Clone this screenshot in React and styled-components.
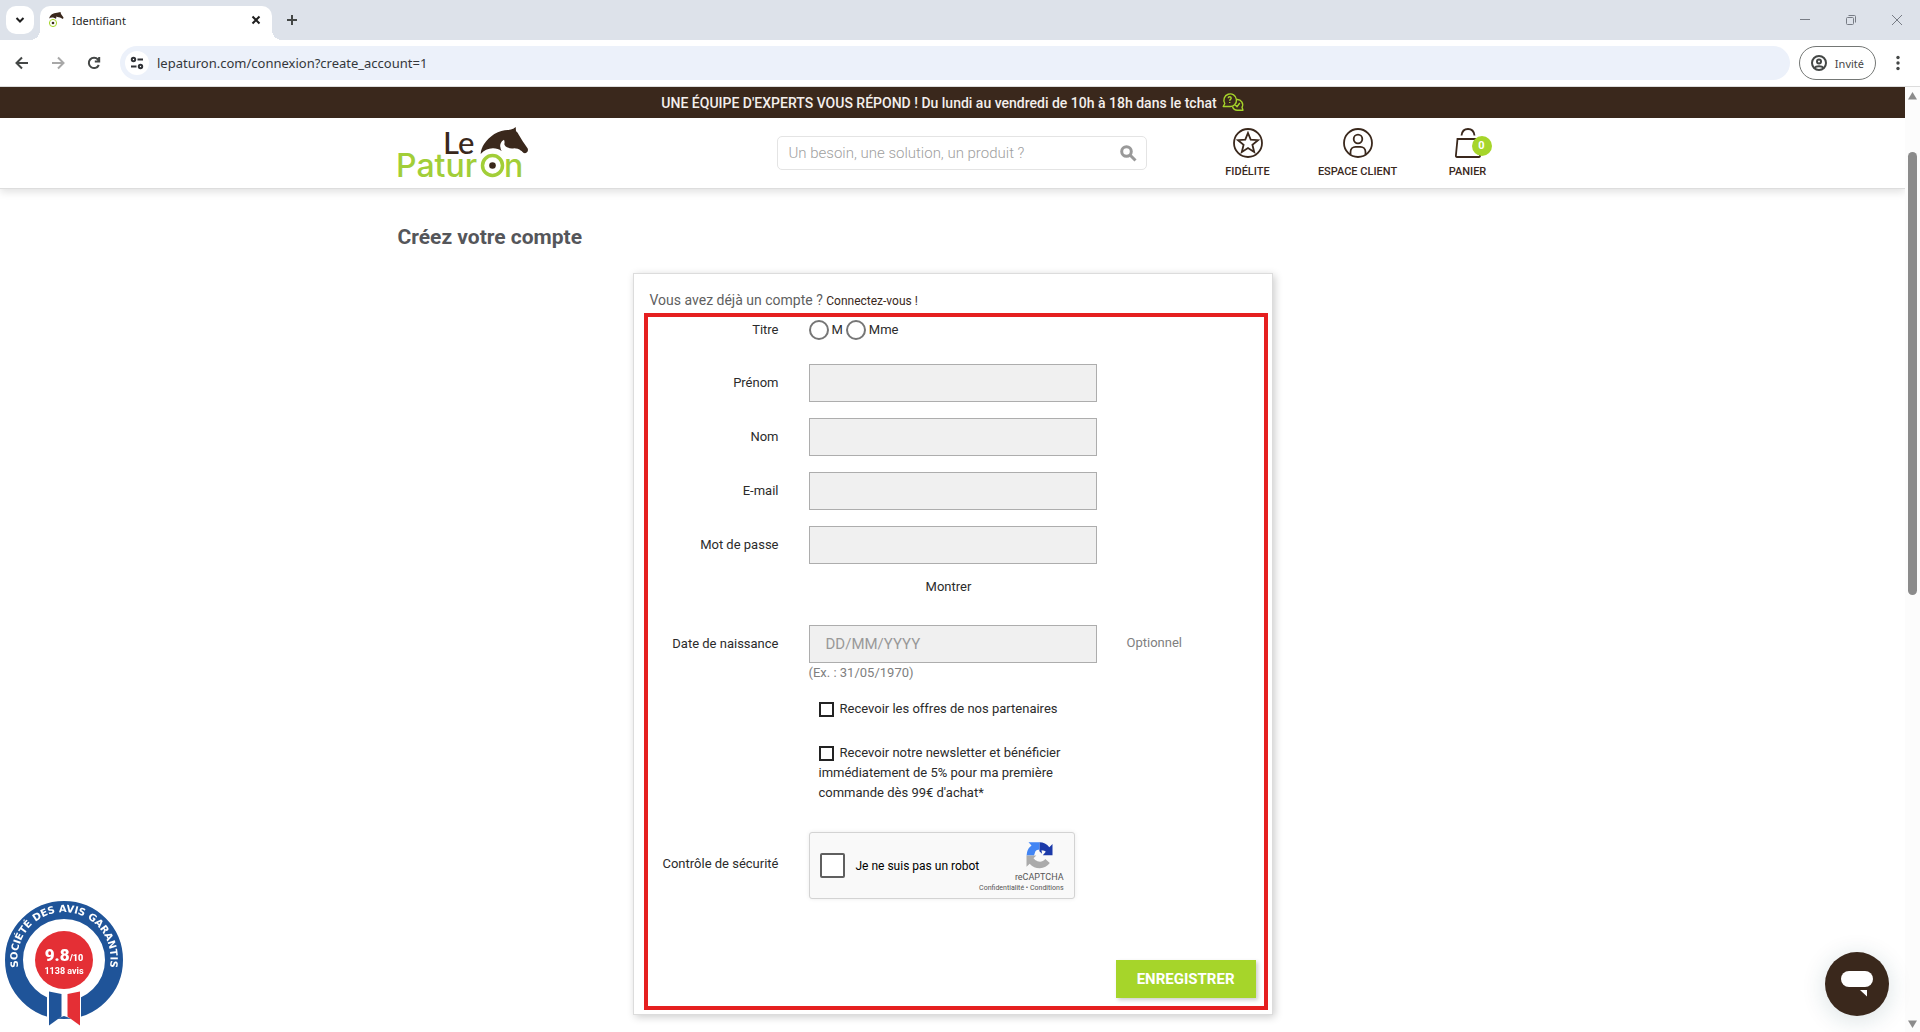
import React from "react";
import styled, { createGlobalStyle } from "styled-components";

const BROWN = "#3a281c";
const GREEN = "#a6d52a";

const Global = createGlobalStyle`
  * {
    box-sizing: border-box;
  }
  body {
    margin: 0;
    background: #fff;
    font-family: Roboto, "Liberation Sans", sans-serif;
    font-size: 13px;
    color: #2b2b2b;
  }
  button,
  input {
    font-family: inherit;
  }
  button {
    padding: 0;
    border: 0;
    background: none;
    color: inherit;
  }
  svg {
    display: block;
    overflow: visible;
  }
`;

/* ---------- browser window ---------- */

const Shell = styled.div`
  display: flex;
  flex-direction: column;
  min-height: 100vh;
`;

const TabStrip = styled.div`
  display: flex;
  align-items: center;
  height: 40px;
  padding-left: 6px;
  background: #dde2ea;
  font-family: "Noto Sans", sans-serif;
`;

const TabSearch = styled.button`
  display: grid;
  place-items: center;
  width: 28px;
  height: 28px;
  border-radius: 10px;
  background: #fff;
`;

const Tab = styled.div`
  position: relative;
  align-self: flex-end;
  display: flex;
  align-items: center;
  gap: 8px;
  width: 232px;
  height: 34px;
  margin-left: 6px;
  padding: 0 8px;
  padding-bottom: 6px;
  border-radius: 10px 10px 0 0;
  background: #fff;
  font-size: 11px;
  color: #1f1f1f;

  &::before,
  &::after {
    content: "";
    position: absolute;
    bottom: 0;
    width: 10px;
    height: 10px;
  }
  &::before {
    right: 100%;
    background: radial-gradient(circle at 0 0, transparent 10px, #fff 10px);
  }
  &::after {
    left: 100%;
    background: radial-gradient(circle at 100% 0, transparent 10px, #fff 10px);
  }
`;

const TabTitle = styled.span`
  flex: 1;
`;

const StripButton = styled.button`
  display: grid;
  place-items: center;
  width: ${(p) => p.$w || 16}px;
  height: 28px;
`;

const WindowButtons = styled.div`
  display: flex;
  margin-left: auto;
`;

const Toolbar = styled.div`
  display: flex;
  align-items: center;
  height: 47px;
  padding: 0 8px 0 4px;
  border-bottom: 1px solid #dcdcdc;
  background: #fff;
  font-family: "Noto Sans", sans-serif;
`;

const NavButton = styled.button`
  display: grid;
  place-items: center;
  width: 36px;
  height: 34px;
`;

const Address = styled.label`
  flex: 1;
  display: flex;
  align-items: center;
  gap: 8px;
  height: 34px;
  margin: 0 9px 0 8px;
  padding: 0 5px;
  border-radius: 17px;
  background: #ecf1fa;
`;

const SiteInfo = styled.span`
  display: grid;
  place-items: center;
  width: 24px;
  height: 24px;
  border-radius: 50%;
  background: #fff;
`;

const AddressInput = styled.input`
  flex: 1;
  padding: 0;
  border: 0;
  outline: 0;
  background: transparent;
  font-size: 13px;
  color: #34373b;
`;

const Profile = styled.button`
  display: flex;
  align-items: center;
  gap: 8px;
  height: 34px;
  padding: 0 11px;
  border: 1px solid #747775;
  border-radius: 17px;
  font-size: 11px;
  color: #474747;
`;

const Menu = styled(NavButton)`
  width: 28px;
  margin-left: 8px;
`;

const Viewport = styled.div`
  flex: 1;
  display: flex;
`;

const Page = styled.div`
  flex: 1;
`;

const Scrollbar = styled.div`
  display: flex;
  flex-direction: column;
  align-items: center;
  width: 15px;
  padding: 5px 0 4px;
  background: #fcfcfc;
`;

const ScrollTrack = styled.div`
  flex: 1;
  padding: 52px 0 0;
`;

const Thumb = styled.div`
  width: 9px;
  height: 51%;
  border-radius: 5px;
  background: #8b8b8b;
`;

/* ---------- site header ---------- */

const Banner = styled.div`
  display: flex;
  justify-content: center;
  align-items: center;
  gap: 5px;
  height: 31px;
  background: ${BROWN};
  font-size: 14px;
  font-weight: 500;
  color: #f4efec;
`;

const Header = styled.header`
  border-bottom: 1px solid #ddd;
  box-shadow: 0 3px 8px rgba(0, 0, 0, 0.12);
`;

const Container = styled.div`
  max-width: 1110px;
  margin: 0 auto;
`;

const HeaderInner = styled(Container)`
  display: grid;
  grid-template-columns: 379px 370px 1fr;
  align-items: center;
  height: 70px;
`;

const SearchForm = styled.form`
  display: flex;
  align-items: center;
  height: 34px;
  padding: 0 10px 0 11px;
  border: 1px solid #e4e4e4;
  border-radius: 5px;
`;

const SearchInput = styled.input`
  flex: 1;
  min-width: 0;
  padding: 0;
  border: 0;
  outline: 0;
  font-size: 15px;
  font-weight: 300;

  &::placeholder {
    color: #a0a0a0;
  }
`;

const Nav = styled.nav`
  display: flex;
  justify-content: flex-end;
  gap: 30px;
`;

const NavItem = styled.a`
  display: flex;
  flex-direction: column;
  align-items: center;
  gap: 6px;
  width: 80px;
  padding-top: 2px;
  font-size: 11px;
  line-height: 16px;
  font-weight: 500;
  color: ${BROWN};
  text-decoration: none;
  white-space: nowrap;
`;

const IconWrap = styled.span`
  position: relative;
`;

const CartCount = styled.span`
  position: absolute;
  top: 8px;
  left: 19px;
  width: 20px;
  height: 20px;
  border-radius: 50%;
  background: ${GREEN};
  font-size: 11px;
  line-height: 20px;
  font-weight: 700;
  text-align: center;
  color: #fff;
`;

/* ---------- account form ---------- */

const Main = styled.main`
  padding: 32px 0 17px;
`;

const Title = styled.h1`
  margin: 0 0 20px;
  font-size: 21px;
  line-height: 32px;
  font-weight: 700;
  color: #55565a;
`;

const Card = styled.section`
  max-width: 640px;
  margin: 0 auto;
  padding: 14px 4px 4px 10px;
  border: 1px solid #dcdcdc;
  box-shadow: 2px 2px 8px rgba(0, 0, 0, 0.2);
`;

const Intro = styled.p`
  margin: 0;
  padding-left: 6px;
  font-size: 14px;
  line-height: 24px;
  color: #5f5f5f;

  a {
    font-size: 12px;
    color: ${BROWN};
    text-decoration: none;
  }
`;

const AccountForm = styled.form`
  display: flex;
  flex-direction: column;
  gap: 16px;
  padding: 0 8px 8px 0;
  border: 4px solid #e51f20;
`;

const Row = styled.div`
  display: grid;
  grid-template-columns: 131px 288px 1fr;
  column-gap: 30px;
  line-height: 38px;
`;

const RowLabel = styled.label`
  text-align: right;
`;

const TitleRow = styled(Row)`
  padding: 3px 0 8px;
  line-height: 20px;
`;

const CaptchaRow = styled(Row)`
  line-height: 64px;
`;

const Radios = styled.div`
  display: flex;
  align-items: center;
  gap: 3px;
`;

const Radio = styled.input`
  appearance: none;
  width: 20px;
  height: 20px;
  margin: 0;
  border: 2px solid #767676;
  border-radius: 50%;

  &:checked {
    background: radial-gradient(circle, #767676 5px, transparent 6px);
  }
`;

const TextInput = styled.input`
  display: block;
  width: 100%;
  height: 38px;
  padding: 0 16px;
  border: 1px solid #adadad;
  border-radius: 0;
  outline: 0;
  background: #f0f0f0;
  font-size: 15px;

  &::placeholder {
    color: #999;
  }
`;

const ShowButton = styled.button`
  display: block;
  width: 100%;
  height: 45px;
  padding-right: 8px;
  font-size: 13px;
`;

const Muted = styled.span`
  display: block;
  font-size: 13px;
  line-height: ${(p) => p.$lh || 20}px;
  color: #808080;
`;

const Checks = styled.div`
  grid-column: 2;
  display: flex;
  flex-direction: column;
  gap: 24px;
  padding: 0 10px 13px;
  line-height: 20px;
`;

const Check = styled.input`
  appearance: none;
  width: 15px;
  height: 15px;
  margin: 0 6px 0 0;
  border: 2px solid #232323;
  background: #fff;
  vertical-align: -4px;

  &:checked {
    background: #232323;
  }
`;

const Captcha = styled.div`
  display: flex;
  align-items: center;
  width: 266px;
  height: 67px;
  padding: 0 10px;
  border: 1px solid #d3d3d3;
  border-radius: 3px;
  background: #f9f9f9;
  box-shadow: 0 0 4px rgba(0, 0, 0, 0.08);
  line-height: 12px;
`;

const RobotLabel = styled.label`
  display: flex;
  flex: 1;
  align-items: center;
  gap: 11px;
  font-size: 12px;
  color: #000;
  white-space: nowrap;
`;

const RobotCheck = styled.input`
  appearance: none;
  width: 25px;
  height: 25px;
  margin: 0;
  border: 2px solid #5f5f5f;
  border-radius: 2px;
  background: #fff;

  &:checked {
    background: #4a90e2;
  }
`;

const CaptchaBrand = styled.div`
  display: flex;
  flex-direction: column;
  align-items: flex-end;
  width: 86px;
  margin-left: -40px;
  padding-top: 4px;
  font-size: 9px;
  color: #555;

  svg {
    margin: 0 11px 2px 0;
  }
`;

const CaptchaLinks = styled.div`
  font-size: 7px;
  line-height: 10px;
  white-space: nowrap;

  a {
    color: #555;
    text-decoration: none;
  }
`;

const Submit = styled.button`
  align-self: flex-end;
  height: 38px;
  margin-top: 45px;
  padding: 0 21px;
  background: ${GREEN};
  box-shadow: 2px 2px 4px rgba(0, 0, 0, 0.2);
  font-size: 15px;
  font-weight: 700;
  color: #fff;
`;

/* ---------- floating widgets ---------- */

const ReviewBadge = styled.a`
  position: fixed;
  left: 4px;
  bottom: 4px;
`;

const ChatButton = styled.button`
  position: fixed;
  right: 31px;
  bottom: 16px;
  display: grid;
  place-items: center;
  width: 64px;
  height: 64px;
  border-radius: 50%;
  background: ${BROWN};
  box-shadow: 0 4px 24px rgba(20, 70, 80, 0.16);
`;

/* ---------- drawings ---------- */

const HORSE =
  "M82.7 28C83 21 88 13.500 96.300 8C101 5 106 4.200 109.700 4C112 3.800 114 3.200 115.300 2.700L117.700 1L118 5.300C119 6 120 7 120.300 8L124.700 15.300L129.700 22.500C130.200 24 130 25.500 129 26.300C128 27.200 126.500 27.300 125.700 27C124.500 26 124 25 123 24.700C121 23 118.500 22.400 116.300 22.300C113 22.800 111 22.300 109 21.300C107 20 106.500 19 106.300 18C106.800 16.500 106.500 15 106 13.700C104.500 14.500 103.600 15.500 103.300 16.300C102.300 18 102 19.500 102.300 20.700C102.500 22.500 103 24 103.700 25.300C101 23 98 22.200 94.700 22.300C90 22.300 86 24.500 82.700 28Z";

const Logo = () => (
  <svg width="132" height="54" viewBox="0 0 132 54" role="img" aria-label="Le Paturon">
    <text x="45" y="28" fill={BROWN} fontFamily="Lato, sans-serif" fontSize="31" fontWeight="500">Le</text>
    <g fontFamily="Inter, sans-serif" fontSize="32" fontWeight="500" fill="#a2ce38">
      <text x="-2" y="51">Patur</text>
      <text x="106" y="51">n</text>
    </g>
    <path d={HORSE} fill={BROWN} />
    <circle cx="94.500" cy="39.500" r="10" fill="#fff" stroke="#a2ce38" strokeWidth="3.500" />
    <circle cx="94.500" cy="39.500" r="3.300" fill={BROWN} />
  </svg>
);

const Favicon = () => (
  <svg width="16" height="16" viewBox="0 0 16 16">
    <path d="M1 6.500C2 3 5 1 9 .800L12.500 0L13 2L15.500 5.500L15 7L12 5.500L9.500 5L8.500 4.500L8 7C6 5 3 5 1 6.500Z" fill={BROWN} />
    <circle cx="5" cy="11" r="3.600" fill="#fff" stroke={GREEN} />
    <circle cx="5" cy="11" r="1.300" fill={BROWN} />
  </svg>
);

const Stroke = ({ size = 16, width = 2, color = "#444746", children }) => (
  <svg width={size} height={size} viewBox={`0 0 ${size} ${size}`} fill="none" stroke={color} strokeWidth={width}>
    {children}
  </svg>
);

const ChatBubbles = () => (
  <Stroke size={22} width={1.400} color={GREEN}>
    <path d="M2.800 11.500A6.300 6.300 0 1 1 7.500 14.500H1.200L2.800 11.500Z" strokeLinejoin="round" />
    <path d="M14.800 7.500A5.300 5.300 0 0 1 20 15.300L21 18.200H15.800A5.300 5.300 0 0 1 10.500 14.800" strokeLinejoin="round" />
    <path d="M6.200 6.200C6.200 4.300 9.200 4.300 9.200 6.200C9.200 7.300 7.700 7.500 7.700 8.700M7.700 10V11M13.300 13L15 14.600L17.800 11" />
  </Stroke>
);

const StarIcon = () => (
  <Stroke size={30} width={1.800} color={BROWN}>
    <circle cx="15" cy="15" r="14" />
    <path d="M15 5L17.700 11.700L25 12.200L19.400 16.800L21.200 24L15 20.100L8.800 24L10.600 16.800L5 12.200L12.300 11.700Z" />
  </Stroke>
);

const UserIcon = () => (
  <Stroke size={30} width={1.800} color={BROWN}>
    <circle cx="15" cy="15" r="14" />
    <circle cx="15" cy="11" r="4.300" />
    <path d="M7.500 26.500V24C7.500 20.500 10 18.800 12.500 18.800H17.500C20 18.800 22.500 20.500 22.500 24V26.500" />
  </Stroke>
);

const BagIcon = () => (
  <Stroke size={30} width={1.800} color={BROWN}>
    <path d="M4.500 11H25.500L27 27.500Q27.200 29 25.800 29H4Q2.800 29 2.900 27.500Z" />
    <path d="M8.500 7.500C9 3 11.500 1 15 1C18.500 1 21 3 21.500 7.500" />
  </Stroke>
);

const RecaptchaLogo = () => (
  <svg width="27" height="27" viewBox="0 0 27 27">
    <path d="M26.500 13.300V2L23.300 5.200A12.800 12.800 0 0 0 13.400 .300V9.200L16 11.800L15.500 8.300C18 8.300 19 9.300 19.800 9.700L16.800 13.300Z" fill="#1c3aa9" />
    <path d="M13.500 .300H2.500L5.500 3.500A12.800 12.800 0 0 0 .600 13.400H8L9.300 9.500C10.500 8 11.500 7.800 13.500 7.600Z" fill="#4285f4" />
    <path d="M.500 13.400V24.800L3.700 21.700A12.800 12.800 0 0 0 23.800 21.100L19.300 17C17 20 14 20 11.500 19.300C9.500 18.500 8.500 17.500 7.500 16.300L10.300 13.400Z" fill="#ababab" />
  </svg>
);

const BadgeDrawing = () => (
  <svg width="120" height="128" viewBox="0 0 120 128" role="img" aria-label="Société des avis garantis">
    <path id="ring" d="M21.400 84.500A46.500 46.500 0 1 1 98.600 84.500" fill="none" />
    <circle cx="60" cy="60" r="50" fill="#fff" stroke="#1f5499" strokeWidth="18" />
    <circle cx="60" cy="60" r="29" fill="#e42f35" />
    <path d="M43 89H77V122L60 116L43 122Z" fill="#fff" />
    <path d="M45 91.500L57.500 94V116.500L45 125.500Z" fill="#1f5499" />
    <path d="M76 91.500L63.500 94V116.500L76 125.500Z" fill="#e42f35" />
    <text fontFamily="'DejaVu Sans', sans-serif" fontSize="10" fontWeight="700" fill="#fff" textAnchor="middle">
      <textPath href="#ring" startOffset="50%">SOCIÉTÉ DES AVIS GARANTIS</textPath>
    </text>
    <g fontFamily="Roboto, sans-serif" fill="#fff" textAnchor="middle">
      <text x="60" y="61" fontSize="17" fontWeight="900">
        9.8<tspan fontSize="9">/10</tspan>
      </text>
      <text x="60" y="74" fontSize="9" fontWeight="700">1138 avis</text>
    </g>
  </svg>
);

const fields = [
  { id: "firstname", label: "Prénom", type: "text" },
  { id: "lastname", label: "Nom", type: "text" },
  { id: "email", label: "E-mail", type: "email" },
];

const Browser = () => (
  <>
    <TabStrip>
      <TabSearch aria-label="Rechercher dans les onglets">
        <Stroke width={2} color="#1f1f1f"><path d="M4.500 6L8 9.500L11.500 6" /></Stroke>
      </TabSearch>
      <Tab>
        <Favicon />
        <TabTitle>Identifiant</TabTitle>
        <StripButton aria-label="Fermer l'onglet">
          <Stroke width={2} color="#1f1f1f"><path d="M4.500 4.500L11.500 11.500M11.500 4.500L4.500 11.500" /></Stroke>
        </StripButton>
      </Tab>
      <StripButton $w={40} aria-label="Nouvel onglet">
        <Stroke><path d="M8 3V13M3 8H13" /></Stroke>
      </StripButton>
      <WindowButtons>
        <StripButton $w={46} aria-label="Réduire">
          <Stroke width={1} color="#777c85"><path d="M3 7.500H13" /></Stroke>
        </StripButton>
        <StripButton $w={46} aria-label="Restaurer">
          <Stroke width={1} color="#777c85">
            <rect x="3.500" y="5.500" width="7" height="7" rx="1" />
            <path d="M5.500 3.500H11.500Q12.500 3.500 12.500 4.500V10.500" />
          </Stroke>
        </StripButton>
        <StripButton $w={46} aria-label="Fermer">
          <Stroke width={1} color="#777c85"><path d="M3 3L13 13M13 3L3 13" /></Stroke>
        </StripButton>
      </WindowButtons>
    </TabStrip>
    <Toolbar>
      <NavButton aria-label="Précédent">
        <Stroke><path d="M14 8H3M8 2.500L2.500 8L8 13.500" /></Stroke>
      </NavButton>
      <NavButton aria-label="Suivant">
        <Stroke color="#a8a8a8"><path d="M2 8H13M8 2.500L13.500 8L8 13.500" /></Stroke>
      </NavButton>
      <NavButton aria-label="Actualiser">
        <Stroke><path d="M12.800 10A5.200 5.200 0 1 1 12 4.500L13 6M13.200 2V6.500H8.800" /></Stroke>
      </NavButton>
      <Address>
        <SiteInfo>
          <Stroke width={2} color="#303236">
            <circle cx="4.500" cy="4.500" r="1.700" />
            <circle cx="11.500" cy="11.500" r="1.700" />
            <path d="M8.500 4.500H14M2 11.500H7.500" />
          </Stroke>
        </SiteInfo>
        <AddressInput aria-label="Adresse" defaultValue="lepaturon.com/connexion?create_account=1" />
      </Address>
      <Profile>
        <Stroke>
          <circle cx="8" cy="8" r="7" />
          <circle cx="8" cy="6.500" r="2" />
          <path d="M3.500 13C5 10.500 11 10.500 12.500 13" />
        </Stroke>
        Invité
      </Profile>
      <Menu aria-label="Menu">
        <svg width="16" height="16" viewBox="0 0 16 16" fill="#444746">
          <circle cx="8" cy="2.500" r="1.700" />
          <circle cx="8" cy="8" r="1.700" />
          <circle cx="8" cy="13.500" r="1.700" />
        </svg>
      </Menu>
    </Toolbar>
  </>
);

const SiteHeader = () => (
  <>
    <Banner>
      UNE ÉQUIPE D'EXPERTS VOUS RÉPOND ! Du lundi au vendredi de 10h à 18h dans le tchat
      <ChatBubbles />
    </Banner>
    <Header>
      <HeaderInner>
        <a href="#accueil"><Logo /></a>
        <SearchForm role="search">
          <SearchInput aria-label="Rechercher" placeholder="Un besoin, une solution, un produit ?" />
          <button type="button" aria-label="Lancer la recherche">
            <Stroke width={3} color="#999">
              <circle cx="6.500" cy="6.500" r="4.800" />
              <path d="M10 10L15.500 15.500" />
            </Stroke>
          </button>
        </SearchForm>
        <Nav>
          <NavItem href="#fidelite"><StarIcon />FIDÉLITE</NavItem>
          <NavItem href="#compte"><UserIcon />ESPACE CLIENT</NavItem>
          <NavItem href="#panier">
            <IconWrap><BagIcon /><CartCount>0</CartCount></IconWrap>
            PANIER
          </NavItem>
        </Nav>
      </HeaderInner>
    </Header>
  </>
);

const CreateAccount = () => (
  <AccountForm>
    <TitleRow role="radiogroup" aria-labelledby="civility">
      <RowLabel as="span" id="civility">Titre</RowLabel>
      <Radios>
        <Radio type="radio" name="gender" id="m" />
        <label htmlFor="m">M</label>
        <Radio type="radio" name="gender" id="mme" />
        <label htmlFor="mme">Mme</label>
      </Radios>
    </TitleRow>
    {fields.map((f) => (
      <Row key={f.id}>
        <RowLabel htmlFor={f.id}>{f.label}</RowLabel>
        <TextInput id={f.id} type={f.type} />
      </Row>
    ))}
    <Row>
      <RowLabel htmlFor="password">Mot de passe</RowLabel>
      <div>
        <TextInput id="password" type="password" />
        <ShowButton type="button">Montrer</ShowButton>
      </div>
    </Row>
    <Row>
      <RowLabel htmlFor="birthday">Date de naissance</RowLabel>
      <div>
        <TextInput id="birthday" placeholder="DD/MM/YYYY" />
        <Muted>(Ex. : 31/05/1970)</Muted>
      </div>
      <Muted $lh={36}>Optionnel</Muted>
    </Row>
    <Row>
      <Checks>
        <label>
          <Check type="checkbox" />
          Recevoir les offres de nos partenaires
        </label>
        <label>
          <Check type="checkbox" />
          Recevoir notre newsletter et bénéficier immédiatement de 5% pour ma première commande dès 99€ d'achat*
        </label>
      </Checks>
    </Row>
    <CaptchaRow>
      <RowLabel htmlFor="robot">Contrôle de sécurité</RowLabel>
      <Captcha>
        <RobotLabel>
          <RobotCheck type="checkbox" id="robot" />
          Je ne suis pas un robot
        </RobotLabel>
        <CaptchaBrand>
          <RecaptchaLogo />
          reCAPTCHA
          <CaptchaLinks>
            <a href="#confidentialite">Confidentialité</a> • <a href="#conditions">Conditions</a>
          </CaptchaLinks>
        </CaptchaBrand>
      </Captcha>
    </CaptchaRow>
    <Submit type="button">ENREGISTRER</Submit>
  </AccountForm>
);

export default function App() {
  return (
    <Shell>
      <Global />
      <Browser />
      <Viewport>
        <Page>
          <SiteHeader />
          <Main>
            <Container>
              <Title>Créez votre compte</Title>
              <Card>
                <Intro>
                  Vous avez déjà un compte ? <a href="#connexion">Connectez-vous !</a>
                </Intro>
                <CreateAccount />
              </Card>
            </Container>
          </Main>
        </Page>
        <Scrollbar>
          <svg width="9" height="8" viewBox="0 0 9 8" fill="#8b8b8b"><path d="M4.500 0L9 7.500H0Z" /></svg>
          <ScrollTrack><Thumb /></ScrollTrack>
          <svg width="9" height="8" viewBox="0 0 9 8" fill="#8b8b8b"><path d="M4.500 8L9 .500H0Z" /></svg>
        </Scrollbar>
      </Viewport>
      <ReviewBadge href="#avis"><BadgeDrawing /></ReviewBadge>
      <ChatButton aria-label="Ouvrir le tchat">
        <svg width="32" height="26" viewBox="0 0 32 26" fill="#fff">
          <rect width="32" height="16" rx="8" />
          <path d="M19 19H26V25.500Z" />
        </svg>
      </ChatButton>
    </Shell>
  );
}
